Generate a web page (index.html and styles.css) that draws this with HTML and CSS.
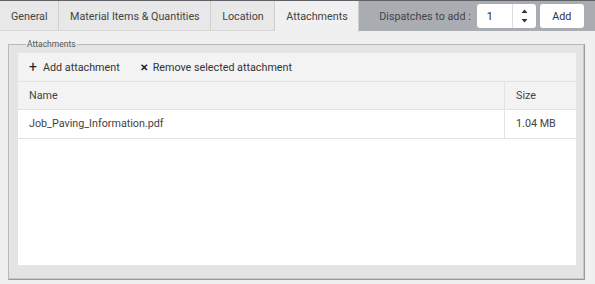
FILE: index.html
```html
<!DOCTYPE html>
<html lang="en">
<head>
    <meta charset="UTF-8">
    <title>Attachments</title>
    <link rel="stylesheet" href="styles.css">
</head>
<body>
<div class="tabbar">
    <ul class="tabs">
        <li>General</li>
        <li>Material Items &amp; Quantities</li>
        <li>Location</li>
        <li class="active">Attachments</li>
    </ul>
    <div class="dispatch">
        <span class="dlabel">Dispatches to add :</span>
        <div class="spin">
            <span class="val">1</span>
            <span class="arrows">
                <svg width="7" height="16" viewBox="0 0 7 16"><path d="M0.5 5L3.5 1.5L6.5 5Z" fill="#333"/><path d="M0.5 11L3.5 14.5L6.5 11Z" fill="#333"/></svg>
            </span>
        </div>
        <span class="addbtn">Add</span>
    </div>
</div>
<fieldset class="box">
    <legend>Attachments</legend>
    <div class="panel">
        <div class="toolbar">
            <span class="tool"><span class="ico">+</span>Add attachment</span>
            <span class="tool"><span class="ico x">&#x2715;</span>Remove selected attachment</span>
        </div>
        <div class="row head">
            <div class="cname">Name</div>
            <div class="csize">Size</div>
        </div>
        <div class="row">
            <div class="cname">Job_Paving_Information.pdf</div>
            <div class="csize">1.04 MB</div>
        </div>
    </div>
</fieldset>
</body>
</html>
```
FILE: styles.css
```css
*{
    margin: 0;
    padding: 0;
    box-sizing: border-box;
}
body{
    background: #f0f0f0;
    font-family: Roboto, "Liberation Sans", sans-serif;
    font-size: 10.75px;
    color: #444;
    width: 595px;
    height: 284px;
    overflow: hidden;
    white-space: nowrap;
}
li{
    list-style: none;
}
.tabbar{
    display: flex;
    height: 31px;
    background: #a9acb0;
    border-top: 1px solid #5f6266;
}
.tabs{
    display: flex;
}
.tabs li{
    height: 30px;
    line-height: 31px;
    padding: 0 10.5px 0 11px;
    background: #e8e8e8;
    border-right: 1px solid #cfcfcf;
    border-bottom: 1px solid #d6d6d6;
}
.tabs li.active{
    background: #f0f0f0;
    border-bottom: none;
    height: 31px;
}
.dispatch{
    display: flex;
    align-items: center;
    padding-left: 20px;
    height: 30px;
}
.dlabel{
    color: #444;
    margin-right: 6px;
}
.spin{
    display: flex;
    width: 59px;
    height: 24px;
    background: #fff;
    border-radius: 3px;
}
.spin .val{
    width: 36px;
    padding-left: 10px;
    line-height: 25px;
    color: #222;
    border-right: 1px solid #ddd;
}
.spin .arrows{
    flex: 1;
    display: flex;
    align-items: center;
    justify-content: center;
}
.addbtn{
    margin-left: 4px;
    width: 44px;
    height: 24px;
    line-height: 25px;
    text-align: center;
    background: #fff;
    border-radius: 3px;
    color: #333;
}
.box{
    margin: 8px 10px 0 8px;
    height: 241px;
    border: 1px solid #b9b9b9;
    border-right-color: #9a9a9a;
    border-bottom-color: #9a9a9a;
    box-shadow: inset -1px -1px 0 #c8c8c8;
    background: #e4e4e4;
    padding: 0 8px 14px 9px;
}
.box legend{
    font-size: 8.5px;
    color: #555;
    margin-left: 8px;
    padding: 0 1px;
    line-height: 11px;
}
.panel{
    margin-top: 3px;
    height: 212px;
    background: #fff;
}
.toolbar{
    display: flex;
    height: 28px;
    align-items: center;
    background: #f3f3f3;
    padding-left: 11px;
    color: #333;
}
.tool{
    display: flex;
    align-items: center;
    margin-right: 20px;
}
.ico{
    font-size: 14px;
    width: 14px;
    color: #222;
}
.ico.x{
    font-size: 10px;
    font-weight: bold;
    width: 13px;
}
.row{
    display: flex;
    height: 29px;
    line-height: 28px;
    border-bottom: 1px solid #e2e2e2;
}
.row.head{
    background: #f3f3f3;
    border-top: 1px solid #e2e2e2;
}
.cname{
    width: 487px;
    padding-left: 11px;
    border-right: 1px solid #e2e2e2;
}
.csize{
    flex: 1;
    padding-left: 11px;
}
```
